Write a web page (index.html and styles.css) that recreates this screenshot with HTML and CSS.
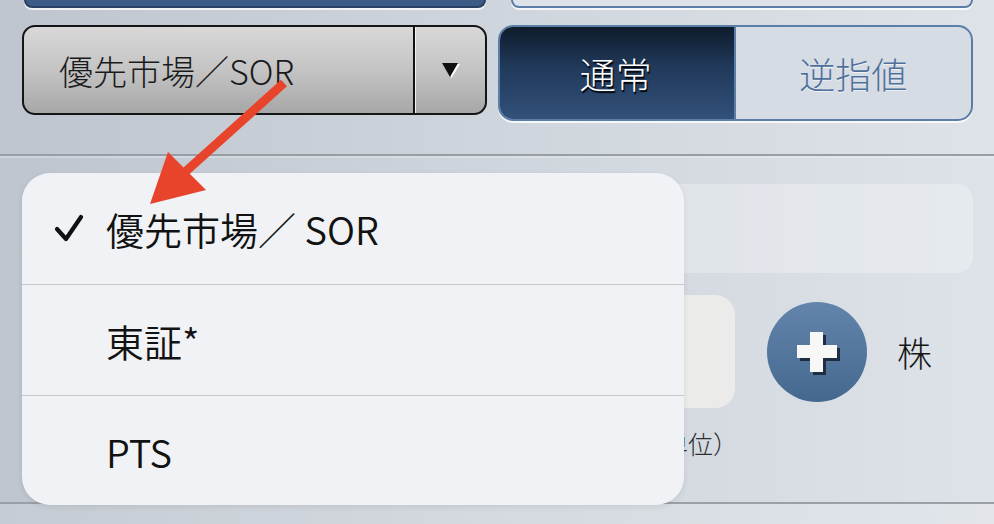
FILE: index.html
```html
<!DOCTYPE html>
<html lang="ja">
<head>
    <meta charset="UTF-8">
    <title>注文入力 - 市場選択</title>
    <link rel="stylesheet" href="styles.css">
</head>
<body>

    <div class="top-row">
        <div class="tab-dark"></div>
        <div class="tab-light"></div>
    </div>

    <div class="order-row">
        <div class="market-select">
            <span class="market-label">優先市場／SOR</span>
            <span class="market-toggle">
                <svg width="20" height="16" viewBox="0 0 20 16">
                    <polygon points="2,2 19,2 10.5,16" fill="#fff"/>
                    <polygon points="1,1 17,1 9,15" fill="#111"/>
                </svg>
            </span>
        </div>
        <div class="segment">
            <button class="seg-btn active">通常</button>
            <button class="seg-btn">逆指値</button>
        </div>
    </div>

    <div class="divider"></div>

    <div class="lower">
        <div class="price-panel"></div>
        <div class="qty-row">
            <div class="qty-input"></div>
            <button class="plus-btn">
                <svg width="100" height="100" viewBox="0 0 100 100">
                    <rect x="33" y="46" width="40" height="13" fill="#1e2d42"/>
                    <rect x="46" y="33" width="13" height="40" fill="#1e2d42"/>
                    <rect x="30" y="43" width="40" height="13" fill="#f7f7f7"/>
                    <rect x="43" y="30" width="13" height="40" fill="#f7f7f7"/>
                </svg>
            </button>
            <span class="unit">株</span>
        </div>
        <div class="qty-hint">（100株単位）</div>
    </div>

    <div class="bottom-bar"></div>

    <!-- market popover -->
    <div class="market-menu">
        <div class="menu-item">
            <span class="mark">
                <svg width="30" height="30" viewBox="0 0 30 30">
                    <polyline points="3,15 12,25 27,3" fill="none" stroke="#111" stroke-width="4.2" stroke-linecap="round" stroke-linejoin="round"/>
                </svg>
            </span>
            優先市場／ SOR
        </div>
        <div class="menu-item"><span class="mark"></span>東証*</div>
        <div class="menu-item"><span class="mark"></span>PTS</div>
    </div>

    <svg class="callout" width="994" height="524" viewBox="0 0 994 524">
        <line x1="284" y1="83" x2="184" y2="173" stroke="#e8432b" stroke-width="9"/>
        <polygon points="150,204 168,152 206,190" fill="#e8432b"/>
    </svg>

</body>
</html>
```

FILE: styles.css
```css
* {
    margin: 0;
    padding: 0;
    box-sizing: border-box;
}

body {
    width: 994px;
    height: 524px;
    overflow: hidden;
    position: relative;
    display: flex;
    flex-direction: column;
    font-family: "Noto Sans CJK JP", "Noto Sans", sans-serif;
    font-weight: 300;
    color: #161616;
    background: linear-gradient(to right, #bec5ce, #cfd5dc 50%, #dee3e9);
}

/* tabs cut off at the top */
.top-row {
    display: flex;
    gap: 25px;
    padding: 0 21px 0 24px;
    height: 10px;
}

.tab-dark {
    width: 462px;
    height: 8px;
    background: #3c5b87;
    border: 2px solid #2a4163;
    border-top: none;
    border-radius: 0 0 12px 12px;
    box-shadow: 0 2px 0 rgba(255, 255, 255, 0.75);
}

.tab-light {
    flex: 1;
    height: 8px;
    background: #dde2e8;
    border: 2px solid #5b7ea8;
    border-top: none;
    border-radius: 0 0 12px 12px;
    box-shadow: 0 2px 0 rgba(255, 255, 255, 0.75);
}

/* market select + order type */
.order-row {
    display: flex;
    align-items: flex-start;
    gap: 11px;
    margin-top: 15px;
    padding: 0 21px 0 22px;
}

.market-select {
    width: 465px;
    height: 90px;
    display: flex;
    border: 2px solid #151515;
    border-radius: 13px;
    background: linear-gradient(to bottom, #d8d8d8, #c4c4c4 50%, #a7a7a7);
    overflow: hidden;
}

.market-label {
    flex: 1;
    display: flex;
    align-items: center;
    padding-left: 35px;
    font-size: 34px;
    color: #1a1a1a;
    border-right: 2px solid #121212;
    box-shadow: 1px 0 0 #f2f2f2;
}

.market-toggle {
    width: 70px;
    display: flex;
    align-items: center;
    justify-content: center;
    padding-left: 2px;
}

.segment {
    flex: 1;
    height: 96px;
    display: flex;
    border: 2px solid #5b7ea8;
    border-radius: 15px;
    background: #d6dce4;
    overflow: hidden;
    box-shadow: 0 2px 0 rgba(255, 255, 255, 0.8);
}

.seg-btn {
    flex: 1;
    border: none;
    background: transparent;
    font-family: inherit;
    font-weight: 300;
    font-size: 36px;
    color: #4e709b;
    text-shadow: 0 1px 0 rgba(255, 255, 255, 0.6);
}

.seg-btn.active {
    color: #fff;
    background: linear-gradient(to bottom, #0e1a2a, #213a5c 45%, #33517a);
    border-right: 2px solid #5b7ea8;
    text-shadow: 1px 2px 1px #000;
    margin: -2px 0 -2px -2px;
}

.divider {
    margin-top: 33px;
    height: 2px;
    background: #979ea6;
    box-shadow: 0 2px 0 rgba(255, 255, 255, 0.25);
}

/* quantity section */
.lower {
    padding: 28px 21px 0 22px;
}

.price-panel {
    height: 89px;
    border-radius: 16px;
    background: rgba(255, 255, 255, 0.28);
}

.qty-row {
    display: flex;
    align-items: center;
    margin-top: 22px;
}

.qty-input {
    width: 713px;
    height: 113px;
    border-radius: 20px;
    background: #ebebea;
}

.plus-btn {
    width: 100px;
    height: 100px;
    margin-left: 32px;
    border: none;
    border-radius: 50%;
    background: linear-gradient(to bottom, #6385ab, #45688f);
    display: flex;
}

.unit {
    margin-left: 30px;
    font-size: 35px;
}

.qty-hint {
    width: 716px;
    margin-top: 17px;
    text-align: right;
    font-size: 25px;
    color: #2e2e2e;
}

.bottom-bar {
    margin-top: auto;
    height: 22px;
    border-top: 2px solid #99a0a8;
    background: rgba(255, 255, 255, 0.12);
}

/* popover menu */
.market-menu {
    position: absolute;
    left: 22px;
    top: 173px;
    width: 662px;
    height: 332px;
    border-radius: 28px;
    background: #f0f2f5;
    overflow: hidden;
    box-shadow: 0 2px 6px rgba(0, 0, 0, 0.08);
}

.menu-item {
    height: 111px;
    display: flex;
    align-items: center;
    padding-left: 32px;
    font-size: 38px;
    font-weight: 350;
    color: #121212;
}

.menu-item + .menu-item {
    border-top: 1px solid #c6c8cc;
}

.mark {
    width: 52px;
    display: flex;
    align-items: center;
}

.callout {
    position: absolute;
    left: 0;
    top: 0;
    pointer-events: none;
}
```
